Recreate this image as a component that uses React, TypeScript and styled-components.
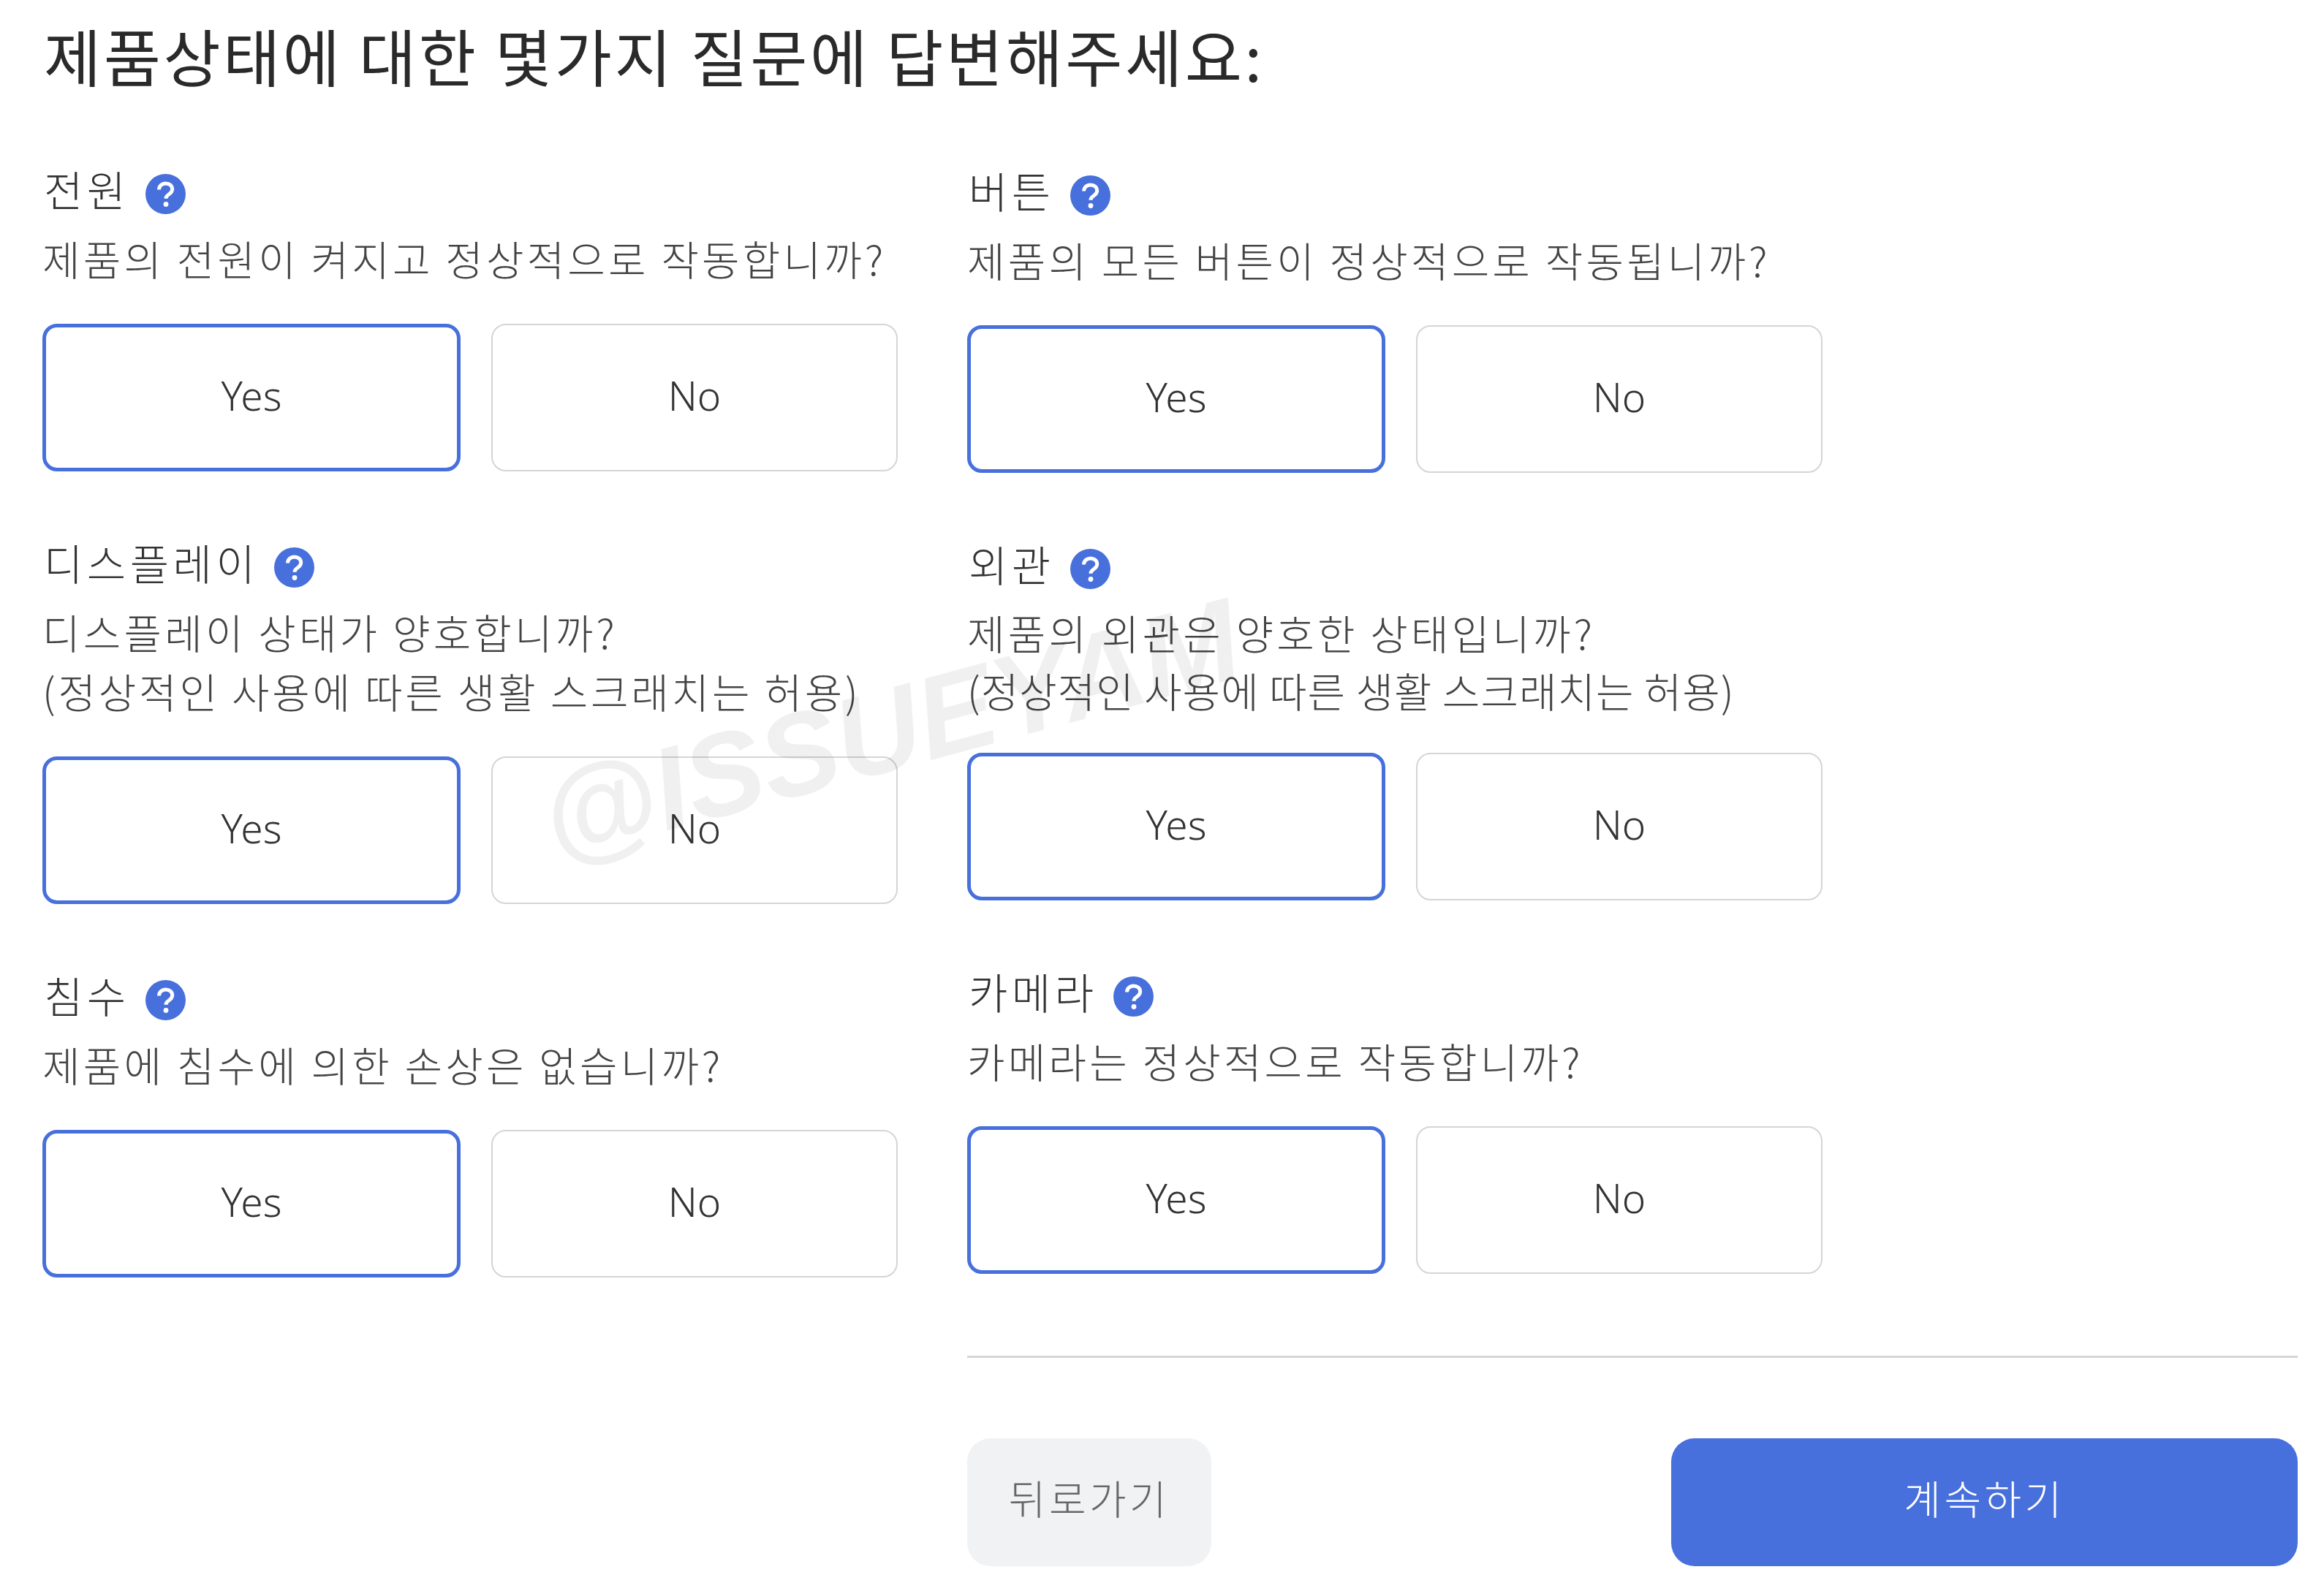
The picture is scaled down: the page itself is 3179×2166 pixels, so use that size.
import styled, { createGlobalStyle } from "styled-components";

const GlobalStyle = createGlobalStyle`
  html, body {
    margin: 0;
    background: #fff;
  }
  * {
    box-sizing: border-box;
  }
`;

const Page = styled.main`
  position: relative;
  width: 3179px;
  height: 2166px;
  overflow: hidden;
  padding: 25px 36px 0 58px;
  font-family: "Noto Sans CJK KR", "Noto Sans", sans-serif;
  font-weight: 300;
  background: #fff;
`;

const Title = styled.h1`
  margin: 0 0 88px 2px;
  font-size: 85px;
  line-height: 100px;
  font-weight: 400;
  letter-spacing: 3.5px;
  color: #2a2a2a;
`;

const Columns = styled.div`
  display: grid;
  grid-template-columns: 1265px 1820px;
`;

const LeftColumn = styled.div`
  display: flex;
  flex-direction: column;
  width: 1170px;
`;

const RightColumn = styled.div`
  display: flex;
  flex-direction: column;
  margin-top: 2px;
`;

const Question = styled.section`
  width: 1170px;
  margin-bottom: 79px;
`;

const Label = styled.h2`
  display: flex;
  align-items: center;
  gap: 21px;
  height: 90px;
  margin: 0 0 9px 2px;
  font-size: 58px;
  line-height: 90px;
  font-weight: 300;
  letter-spacing: 5.5px;
  color: #333;
`;

const HelpIcon = styled.svg`
  width: 55px;
  height: 55px;
  margin-top: 14px;
  flex: none;
`;

const Description = styled.p`
  margin: 0 0 ${(p) => (p.$tight ? 47 : 50)}px;
  font-size: 56px;
  line-height: ${(p) => (p.$tight ? 79 : 81)}px;
  letter-spacing: 4.2px;
  white-space: nowrap;
  color: #444;
`;

const Note = styled.span`
  display: block;
  letter-spacing: ${(p) => (p.$tight ? 1 : 3.8)}px;
`;

const Choices = styled.div`
  display: grid;
  grid-template-columns: 572px 556px;
  gap: 42px;
`;

const Choice = styled.button`
  height: 202px;
  padding: 0 0 8px;
  border: ${(p) => (p.$selected ? "5px solid #4870dc" : "2.5px solid #d4d5d8")};
  border-radius: 20px;
  background: transparent;
  font-family: "Noto Sans", sans-serif;
  font-size: 55px;
  font-weight: 300;
  color: #333;
`;

const Divider = styled.hr`
  width: 100%;
  height: 3px;
  margin: 33px 0 110px;
  border: 0;
  background: #d4d5d8;
`;

const Actions = styled.div`
  display: flex;
  justify-content: space-between;
`;

const ActionButton = styled.button`
  width: ${(p) => (p.$primary ? 857 : 334)}px;
  height: 175px;
  padding: 0 0 16px;
  border: 0;
  border-radius: 32px;
  background: ${(p) => (p.$primary ? "#4870dc" : "#f1f2f4")};
  font-family: inherit;
  font-size: 55px;
  font-weight: 300;
  letter-spacing: 4.5px;
  color: ${(p) => (p.$primary ? "#fff" : "#666")};
`;

const Watermark = styled.div`
  position: absolute;
  left: 728px;
  top: 908px;
  font-family: "Liberation Sans", sans-serif;
  font-size: 160px;
  line-height: 180px;
  font-weight: 700;
  font-style: italic;
  white-space: nowrap;
  color: rgba(0, 0, 0, 0.06);
  transform: rotate(-15deg);
  pointer-events: none;
`;

const Help = () => (
  <HelpIcon viewBox="0 0 55 55" aria-hidden="true">
    <circle cx="27.5" cy="27.5" r="27.5" fill="#4870dc" />
    <path
      d="M18.5 21.5c0-5 4-8.500 9.200-8.500s9 3.300 9 7.800c0 3.800-2.300 5.500-4.800 7.200-2.300 1.500-3.900 2.800-3.900 5.700"
      fill="none"
      stroke="#fff"
      strokeWidth="5"
    />
    <circle cx="28" cy="41.500" r="3.400" fill="#fff" />
  </HelpIcon>
);

type Item = { label: string; text: string; note?: string; tight?: boolean };

const scratchNote = "(정상적인 사용에 따른 생활 스크래치는 허용)";

const leftItems: Item[] = [
  { label: "전원", text: "제품의 전원이 켜지고 정상적으로 작동합니까?" },
  { label: "디스플레이", text: "디스플레이 상태가 양호합니까?", note: scratchNote },
  { label: "침수", text: "제품에 침수에 의한 손상은 없습니까?" },
];

const rightItems: Item[] = [
  { label: "버튼", text: "제품의 모든 버튼이 정상적으로 작동됩니까?" },
  { label: "외관", text: "제품의 외관은 양호한 상태입니까?", note: scratchNote, tight: true },
  { label: "카메라", text: "카메라는 정상적으로 작동합니까?" },
];

const QuestionBlock = ({ item }: { item: Item }) => (
  <Question>
    <Label>
      {item.label}
      <Help />
    </Label>
    <Description $tight={item.tight}>
      {item.text}
      {item.note && <Note $tight={item.tight}>{item.note}</Note>}
    </Description>
    <Choices>
      <Choice $selected>Yes</Choice>
      <Choice>No</Choice>
    </Choices>
  </Question>
);

const App = () => {
  return (
    <Page>
      <GlobalStyle />
      <Title>제품상태에 대한 몇가지 질문에 답변해주세요:</Title>
      <Columns>
        <LeftColumn>
          {leftItems.map((item) => (
            <QuestionBlock key={item.label} item={item} />
          ))}
        </LeftColumn>
        <RightColumn>
          {rightItems.map((item) => (
            <QuestionBlock key={item.label} item={item} />
          ))}
          <Divider />
          <Actions>
            <ActionButton>뒤로가기</ActionButton>
            <ActionButton $primary>계속하기</ActionButton>
          </Actions>
        </RightColumn>
      </Columns>
      <Watermark>@ISSUEYAM</Watermark>
    </Page>
  );
};

export default App;
